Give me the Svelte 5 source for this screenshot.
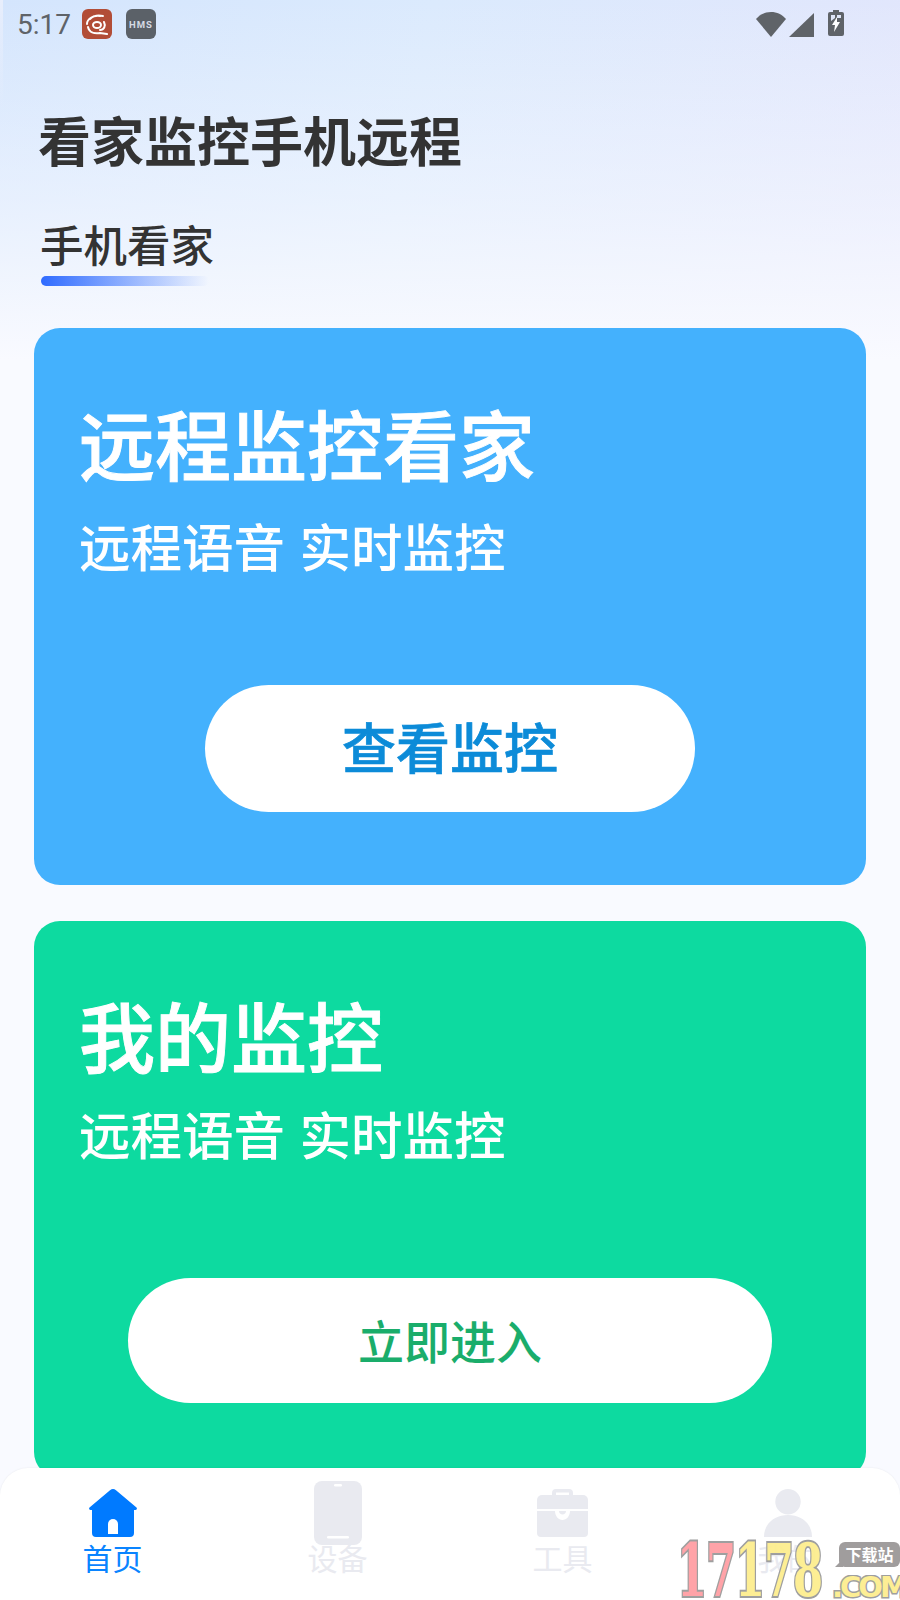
<script>
  const tabs = [
    { label: '首页', icon: 'home', active: true },
    { label: '设备', icon: 'phone' },
    { label: '工具', icon: 'case' },
    { label: '我的', icon: 'user' }
  ];
  const digits = [
    { ch: '1', tone: 'pink' },
    { ch: '7', tone: 'pink' },
    { ch: '1', tone: 'yellow' },
    { ch: '7', tone: 'yellow' },
    { ch: '8', tone: 'yellow wide' }
  ];
</script>

<div class="page">
  <div class="status">
    <span class="time">5:17</span>
    <span class="app red">
      <svg viewBox="0 0 30 30" width="30" height="30">
        <g fill="none" stroke="#fff" stroke-linecap="round">
          <ellipse cx="15" cy="16" rx="4" ry="3" stroke-width="2"/>
          <path d="M5 15c0-5 6-9 13-8M8 10c3-3 8-4 13-3M6 18c1 5 6 7 12 6l7 1M22 13c2 4 0 8-4 8" stroke-width="2"/>
        </g>
      </svg>
    </span>
    <span class="app grey">HMS</span>
    <span class="sysicons">
      <svg viewBox="0 0 58 30" width="58" height="30">
        <path d="M15 28 0 10C4 5.500 9 3 15 3s11 2.500 15 7Z" fill="#5f6368"/>
        <path d="M33 28 58 4v24Z" fill="#5f6368"/>
      </svg>
      <svg viewBox="0 0 16 26" width="16" height="26" class="batt">
        <path d="M5 0h6v2h3a2 2 0 0 1 2 2v20a2 2 0 0 1-2 2H2a2 2 0 0 1-2-2V4a2 2 0 0 1 2-2h3Z" fill="#5f6368"/>
        <path d="M3 5h4v3l-4 3ZM9 5h4v3H9Z" fill="#dfe6f8"/>
        <path d="M9 7 4 15h3l-1 7 6-10H9Z" fill="#fff"/>
      </svg>
    </span>
  </div>

  <h1>看家监控手机远程</h1>

  <div class="section">
    <span class="section-title">手机看家</span>
    <span class="underline"></span>
  </div>

  <div class="cards">
    <section class="card blue">
      <h2>远程监控看家</h2>
      <p>远程语音 实时监控</p>
      <button class="cta short">查看监控</button>
    </section>

    <section class="card green">
      <h2>我的监控</h2>
      <p>远程语音 实时监控</p>
      <button class="cta long">立即进入</button>
    </section>
  </div>

  <nav class="tabbar">
    {#each tabs as t}
      <div class="tab" class:active={t.active}>
        <span class="icon">
          {#if t.icon === 'home'}
            <svg class="shift" viewBox="0 0 48 48" width="48" height="48">
              <path d="M24 0c1 0 2 .4 3 1.200L47.500 18.500c.8.8.4 2.500-1 2.500H45v23a4 4 0 0 1-4 4H7a4 4 0 0 1-4-4V21H1.500c-1.400 0-1.800-1.700-1-2.500L21 1.200C22 .4 23 0 24 0Z" fill="#007aff"/>
              <path d="M19 45V35a5 5 0 0 1 10 0v10Z" fill="#fff"/>
            </svg>
          {:else if t.icon === 'phone'}
            <svg viewBox="0 0 48 64" width="48" height="64">
              <rect width="48" height="64" rx="8" fill="#e9eaf0"/>
              <rect x="20" y="3" width="8" height="2.500" rx="1.200" fill="#fff"/>
              <rect x="13" y="55" width="22" height="2.500" rx="1.200" fill="#fff"/>
            </svg>
          {:else if t.icon === 'case'}
            <svg class="shift" viewBox="0 0 51 48" width="51" height="48">
              <path d="M15 6V4a4 4 0 0 1 4-4h13a4 4 0 0 1 4 4v2h-4V3.500H19V6Z" fill="#e9eaf0"/>
              <path d="M5 6h41a5 5 0 0 1 5 5v9H0v-9a5 5 0 0 1 5-5Z" fill="#e9eaf0"/>
              <path d="M0 22h18c0 5 3.500 9 7.500 9S33 27 33 22h18v22a4 4 0 0 1-4 4H4a4 4 0 0 1-4-4Z" fill="#e9eaf0"/>
              <path d="M22 22h7c0 2-1.500 3.500-3.500 3.500S22 24 22 22Z" fill="#e9eaf0"/>
            </svg>
          {:else}
            <svg class="shift" viewBox="0 0 48 48" width="48" height="48">
              <circle cx="24" cy="12.700" r="12.700" fill="#e9eaf0"/>
              <path d="M0 48c0-13 10-22 24-22s24 9 24 22Z" fill="#e9eaf0"/>
            </svg>
          {/if}
        </span>
        <span class="label">{t.label}</span>
      </div>
    {/each}
  </nav>

  <div class="wm">
    <span class="wm-num">
      {#each digits as d}
        <span class="cell {d.tone}"><span class="glyph">{d.ch}</span></span>
      {/each}
    </span>
    <span class="wm-side">
      <span class="wm-tag">下载站</span>
      <span class="wm-com">.COM</span>
    </span>
  </div>
</div>

<style>
  :global(body) { margin: 0; }
  .page {
    position: relative;
    width: 900px;
    height: 1600px;
    overflow: hidden;
    box-sizing: border-box;
    font-family: "Noto Sans CJK SC", "Noto Sans", sans-serif;
    background:
      linear-gradient(100deg, #d4e5fd 0%, #dbeafd 45%, #e2e6fc 100%) top / 100% 360px no-repeat,
      #f9faff;
    display: flex;
    flex-direction: column;
  }
  .page::before {
    content: "";
    position: absolute;
    inset: 0 0 auto 0;
    height: 360px;
    background:
      linear-gradient(180deg, #e8eefc, rgba(232,238,252,0)) left top / 3px 110px no-repeat,
      linear-gradient(180deg, rgba(249,250,255,0) 0%, rgba(249,250,255,.5) 55%, rgba(249,250,255,1) 100%);
  }
  .page > * { position: relative; }

  .status {
    height: 48px;
    display: flex;
    align-items: center;
    padding: 0 56px 0 17px;
    color: #5f6368;
  }
  .time { font: 400 28px Roboto, sans-serif; width: 65px; }
  .app {
    width: 30px;
    height: 30px;
    border-radius: 6px;
    margin-right: 14px;
    display: flex;
    align-items: center;
    justify-content: center;
  }
  .red { background: #b24d37; }
  .grey { background: #5b6168; color: #d5dae4; font: 700 9.500px Roboto, sans-serif; letter-spacing: 1px; }
  .sysicons { margin-left: auto; display: flex; align-items: center; gap: 14px; }
  .batt { margin-top: -2px; }

  h1 {
    margin: 61px 0 0 38px;
    font-size: 53px;
    line-height: 60px;
    font-weight: 700;
    color: #333;
    letter-spacing: 0;
  }

  .section { margin: 50px 0 0 41px; display: flex; flex-direction: column; }
  .section-title { margin-left: -1px; font-size: 43.500px; line-height: 50px; color: #333; font-weight: 500; }
  .underline {
    width: 168px;
    height: 10px;
    margin-top: 7px;
    border-radius: 5px;
    background: linear-gradient(90deg, #2f6bff 0%, rgba(47,107,255,0) 100%);
  }

  .cards { margin: 42px 34px 0; display: flex; flex-direction: column; gap: 36px; }
  .card { border-radius: 26px; height: 557px; box-sizing: border-box; padding: 0 45px; color: #fff; display: flex; flex-direction: column; }
  .blue { background: #44b1fd; }
  .green { background: #0ddaa0; }
  .card h2 { margin: 69px 0 0; font-size: 76px; line-height: 90px; font-weight: 500; -webkit-text-stroke: .9px #fff; }
  .card p { margin: 27px 0 0; font-size: 51.500px; line-height: 62px; font-weight: 500; word-spacing: 3px; }
  .green h2 { margin-top: 68px; }
  .green p { margin-top: 23px; }

  .cta {
    align-self: center;
    border: 0;
    background: #fff;
    font-family: inherit;
    font-size: 54px;
    padding: 0;
    position: relative;
  }
  .short { width: 490px; height: 127px; border-radius: 64px; color: #0c8bd8; margin-top: 109px; font-weight: 500; padding-bottom: 7px; -webkit-text-stroke: .7px #0c8bd8; }
  .long { width: 644px; height: 125px; border-radius: 63px; color: #1aad6b; font-size: 46px; margin-top: 114px; font-weight: 500; padding-bottom: 4px; }
  .long::before {
    content: "";
    position: absolute;
    left: 120px;
    right: 120px;
    top: -1px;
    bottom: -1px;
    background: #fff;
    z-index: -1;
  }

  .tabbar {
    position: absolute;
    left: 0;
    right: 0;
    bottom: 0;
    height: 132px;
    background: #fff;
    border-radius: 28px 28px 0 0;
    box-shadow: 0 0 2px rgba(0,0,0,.08);
    display: grid;
    grid-template-columns: repeat(4, 225px);
  }
  .tab { display: flex; flex-direction: column; align-items: center; color: #e9eaf0; position: relative; height: 100%; }
  .tab.active { color: #0a84ff; }
  .icon { height: 64px; margin-top: 13px; display: flex; align-items: flex-start; }
  .shift { margin-top: 8px; }
  .label { position: absolute; top: 69px; font-size: 30px; line-height: 40px; }

  .wm {
    position: absolute;
    left: 677px;
    top: 1540px;
    width: 223px;
    height: 60px;
    display: flex;
    opacity: .94;
  }
  .wm-num { display: flex; height: 60px; }
  .cell { display: block; width: 29px; height: 60px; }
  .cell.wide { width: 38px; }
  .glyph {
    display: block;
    font: 700 72px/62px "DejaVu Serif", serif;
    transform: scaleX(.6);
    transform-origin: left center;
    paint-order: stroke fill;
    -webkit-text-stroke: 4px #9a9a9a;
  }
  .pink { color: #ff9ea3; }
  .yellow { color: #fdee8e; }
  .wm-side { display: flex; flex-direction: column; align-items: flex-end; flex: 1; }
  .wm-tag {
    position: relative;
    align-self: flex-end;
    margin-top: 2px;
    width: 61px;
    height: 25px;
    box-sizing: border-box;
    text-align: center;
    background: #9b9797;
    color: #fff;
    font-size: 16px;
    line-height: 25px;
    border-radius: 6px;
    font-weight: 700;
  }
  .wm-tag::after {
    content: "";
    position: absolute;
    left: -4px;
    bottom: 0;
    border-bottom: 8px solid #9b9797;
    border-left: 8px solid transparent;
  }
  .wm-com {
    margin-top: 8px;
    width: 68px;
    height: 25px;
    font: 700 29px/25px "DejaVu Sans", sans-serif;
    color: #fdee8e;
    paint-order: stroke fill;
    -webkit-text-stroke: 3px #9a9a9a;
    letter-spacing: -3px;
    white-space: nowrap;
    overflow: hidden;
  }
</style>
